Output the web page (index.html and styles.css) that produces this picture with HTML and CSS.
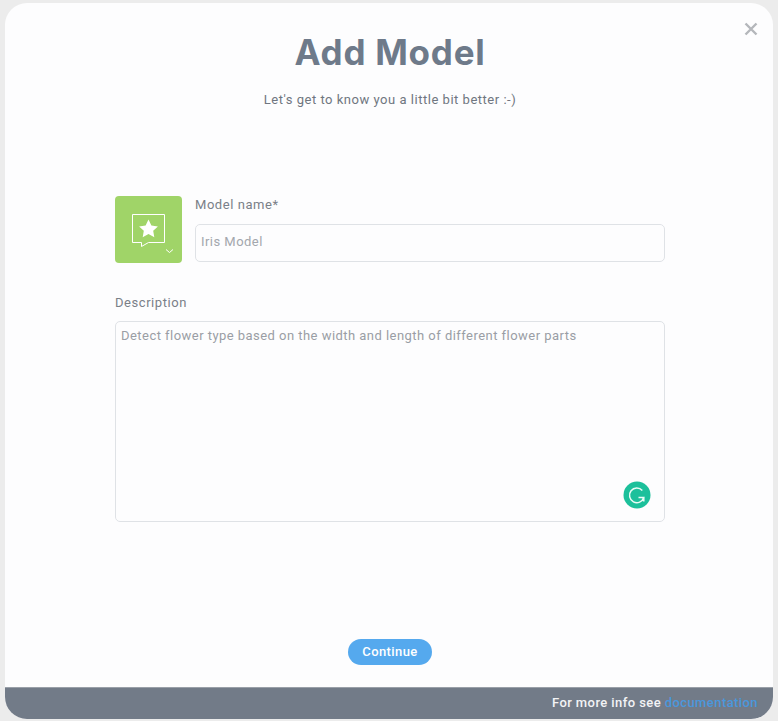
FILE: index.html
```html
<!DOCTYPE html>
<html lang="en">
<head>
<meta charset="utf-8">
<title>Add Model</title>
<link rel="stylesheet" href="styles.css">
</head>
<body>
<main class="modal">
  <button class="close" aria-label="Close">
    <svg width="14" height="14" viewBox="0 0 14 14"><path d="M1.5 1.5l11 11M12.5 1.5l-11 11" fill="none" stroke="#b4b7bb" stroke-width="2.4"/></svg>
  </button>
  <div class="content">
    <h1 class="title">Add Model</h1>
    <p class="subtitle">Let's get to know you a little bit better :-)</p>
    <form class="form">
      <div class="name-row">
        <div class="icon-tile">
          <svg class="tile-icon" width="34" height="34" viewBox="0 0 34 34">
            <path d="M.5 1.500h32v28H16.500l-7 4v-4h-9z" fill="none" stroke="#fff" stroke-width="1"/>
            <path d="M16.500 6.500l2.900 6 6.500.9-4.700 4.400 1.100 6.400-5.800-3.100-5.800 3.100 1.100-6.400-4.700-4.400 6.500-.9z" fill="#fff"/>
          </svg>
          <svg class="tile-chevron" width="9" height="6" viewBox="0 0 9 6"><path d="M1 1.500l3.500 3 3.500-3" fill="none" stroke="#fff" stroke-width="1"/></svg>
        </div>
        <div class="field name-field">
          <label class="label">Model name*</label>
          <div class="input">Iris Model</div>
        </div>
      </div>
      <div class="field desc-field">
        <label class="label">Description</label>
        <div class="textarea">
          Detect flower type based on the width and length of different flower parts
          <span class="grammarly">
            <svg width="28" height="28" viewBox="0 0 28 28"><circle cx="14" cy="14" r="13.500" fill="#1cc09b"/><path d="M19.300 9.500A7.300 7.300 0 1 0 20.800 16.500H15.500M20.800 16.500v4" fill="none" stroke="#e8fbf5" stroke-width="1.500"/></svg>
          </span>
        </div>
      </div>
    </form>
    <button class="continue" type="button">Continue</button>
  </div>
  <footer class="footer">For more info see&nbsp;<a class="doc-link">documentation</a></footer>
</main>
</body>
</html>
```

FILE: styles.css
```css
* { box-sizing: border-box; }
html, body { height: 100%; }
body {
  margin: 0;
  padding: 3px 5px 2px;
  background: #ececec;
  font-family: Roboto, "Liberation Sans", sans-serif;
  overflow: hidden;
}
.modal {
  position: relative;
  display: flex;
  flex-direction: column;
  height: 716px;
  background: #fdfdfe;
  border-radius: 22px;
  overflow: hidden;
}
.close {
  position: absolute;
  top: 19px;
  right: 15px;
  padding: 0;
  border: 0;
  background: none;
  line-height: 0;
}
.content {
  flex: 1;
  display: flex;
  flex-direction: column;
  align-items: center;
  padding-left: 2px;
}
.title {
  margin: 24px 0 0;
  font-family: Inter, sans-serif;
  font-size: 35px;
  line-height: 50px;
  font-weight: 700;
  letter-spacing: .75px;
  color: #6e7a8a;
}
.subtitle {
  margin: 13px 0 0;
  font-size: 13px;
  line-height: 20px;
  letter-spacing: .52px;
  color: #6f7680;
}
.form {
  width: 550px;
  margin-top: 86px;
}
.name-row {
  display: flex;
  gap: 13px;
}
.icon-tile {
  position: relative;
  display: flex;
  align-items: center;
  justify-content: center;
  flex: none;
  width: 67px;
  height: 67px;
  border-radius: 4px;
  background: #a0d468;
}
.tile-chevron {
  position: absolute;
  right: 8px;
  bottom: 9px;
}
.field { display: flex; flex-direction: column; }
.name-field { flex: 1; }
.label {
  font-size: 13px;
  line-height: 18px;
  letter-spacing: .55px;
  color: #7a8088;
}
.input {
  height: 38px;
  margin-top: 10px;
  padding: 0 5px;
  border: 1px solid #dfe2e6;
  border-radius: 5px;
  font-size: 13px;
  line-height: 34px;
  letter-spacing: .46px;
  color: #a3a7ad;
}
.desc-field { margin-top: 31px; }
.textarea {
  position: relative;
  height: 201px;
  margin-top: 9px;
  padding: 5px;
  border: 1px solid #dfe2e6;
  border-radius: 5px;
  font-size: 13px;
  line-height: 18px;
  letter-spacing: .46px;
  color: #9a9ea5;
}
.grammarly {
  position: absolute;
  right: 13px;
  bottom: 12px;
  line-height: 0;
}
.continue {
  margin-top: 117px;
  width: 84px;
  height: 26px;
  padding: 0 0 2px;
  border: 0;
  border-radius: 13px;
  background: #55a9ee;
  color: #fff;
  font-family: inherit;
  font-size: 13px;
  font-weight: 500;
  letter-spacing: .4px;
}
.footer {
  display: flex;
  align-items: center;
  justify-content: flex-end;
  height: 32px;
  padding: 0 15px 2px 0;
  background: #727b88;
  border-top: 1px solid #9aa0a8;
  color: #f2f3f5;
  font-size: 13px;
  font-weight: 500;
  letter-spacing: .42px;
}
.doc-link { color: #4a97dc; }
```
